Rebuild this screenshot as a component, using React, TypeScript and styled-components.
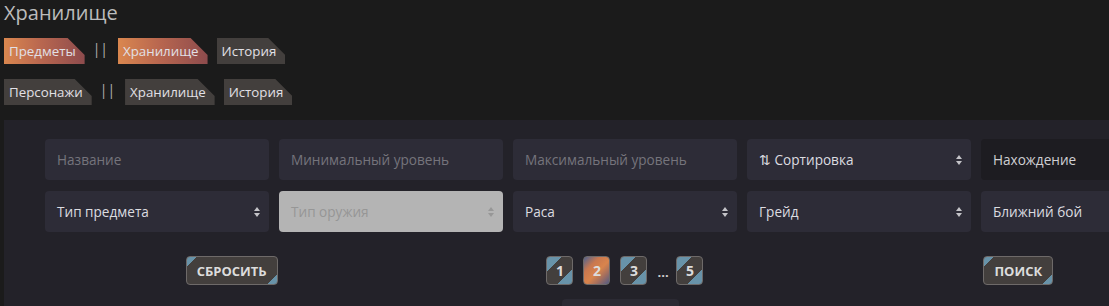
import React from 'react';
import styled, { createGlobalStyle, css } from 'styled-components';

const GlobalStyle = createGlobalStyle`
  html, body {
    margin: 0;
    padding: 0;
    background: #1b1b1b;
    overflow: hidden;
  }
  body {
    font-family: "Open Sans", "Liberation Sans", sans-serif;
    -webkit-font-smoothing: antialiased;
  }
`;

const Page = styled.div`
  padding-left: 4px;
`;

const Title = styled.h2`
  margin: 0;
  font-size: 20px;
  line-height: 26px;
  font-weight: 400;
  color: #bcbcbc;
`;

const TabRow = styled.div<{ $first?: boolean }>`
  display: flex;
  align-items: center;
  margin-top: ${(p) => (p.$first ? '12px' : '15px')};
`;

const Tab = styled.a<{ $active?: boolean }>`
  display: inline-flex;
  align-items: center;
  height: 26px;
  padding: 0 9px 0 5px;
  font-size: 13.3px;
  color: #e2e0e6;
  text-decoration: none;
  clip-path: polygon(0 0, calc(100% - 17px) 0, 100% 17px, 100% 100%, 0 100%);
  background: ${(p) => (p.$active ? 'linear-gradient(90deg, #da874f 0%, #b9674f 45%, #8d4b4d 100%)' : '#433f3d')};
  & + & {
    margin-left: 9px;
  }
`;

const Separator = styled.span`
  margin: -6px 10px 0 8px;
  font-size: 14px;
  color: #b0b0b0;
`;

const Panel = styled.section`
  margin-top: 15px;
  width: 1242px;
  height: 200px;
  box-sizing: border-box;
  padding: 19px 41px 0;
  background: #232229;
`;

const Filters = styled.div`
  display: grid;
  grid-template-columns: repeat(5, 224px);
  grid-auto-rows: 41px;
  column-gap: 10px;
  row-gap: 11px;
`;

const fieldBase = css`
  display: flex;
  align-items: center;
  justify-content: space-between;
  box-sizing: border-box;
  padding: 0 9px 0 12px;
  border-radius: 4px;
  font-size: 13.6px;
`;

const Field = styled.div<{ $variant?: 'placeholder' | 'value' | 'dark' | 'disabled' }>`
  ${fieldBase};
  background: ${(p) => (p.$variant === 'dark' ? '#1d1c21' : p.$variant === 'disabled' ? '#b4b4b4' : '#2d2c37')};
  color: ${(p) =>
    p.$variant === 'placeholder' ? '#75747c' : p.$variant === 'disabled' ? '#969696' : p.$variant === 'dark' ? '#d0d0d4' : '#dcdce0'};
`;

const Arrows = ({ color }: { color: string }) => (
  <svg width="6" height="10" viewBox="0 0 6 10">
    <path d="M3 0 L6 4 L0 4 Z M3 10 L6 6 L0 6 Z" fill={color} />
  </svg>
);

const Actions = styled.div`
  display: grid;
  grid-template-columns: repeat(3, 1fr);
  align-items: center;
  justify-items: center;
  margin: 24px -10px 0;
`;

const cornerBtn = css`
  box-sizing: border-box;
  height: 29px;
  border: 1px solid #6e6a69;
  border-radius: 4px;
  color: #dcdcdc;
  font-family: "Open Sans", "Liberation Sans", sans-serif;
  font-weight: 700;
  display: inline-flex;
  align-items: center;
  justify-content: center;
`;

const ActionButton = styled.button`
  ${cornerBtn};
  padding: 0 10px;
  font-size: 13px;
  background: linear-gradient(135deg, #6893a9 7px, transparent 7px),
    linear-gradient(315deg, #6893a9 7px, transparent 7px), #433f3d;
`;

const Pager = styled.div`
  display: flex;
  align-items: center;
  gap: 10px;
`;

const PageButton = styled.button<{ $current?: boolean }>`
  ${cornerBtn};
  width: 27px;
  padding: 0;
  font-size: 14px;
  background: ${(p) =>
    p.$current
      ? 'linear-gradient(135deg, #4d6390 0%, #c9784f 30%, #d9844c 55%, #a46f5e 75%, #4f5b86 100%)'
      : 'linear-gradient(135deg, #6893a9 10px, transparent 10px), linear-gradient(315deg, #6893a9 10px, transparent 10px), #433f3d'};
`;

const Ellipsis = styled.span`
  width: 9px;
  color: #d0d0d0;
  font-size: 13px;
  font-weight: 700;
  line-height: 1;
  margin-top: 4px;
`;

const Below = styled.div`
  margin: 14px 0 0 517px;
  width: 117px;
  height: 20px;
  border-radius: 4px 4px 0 0;
  background: #2b2a33;
`;

export default function App() {
  return (
    <>
      <GlobalStyle />
      <Page>
        <Title>Хранилище</Title>
        <TabRow $first>
          <Tab $active>Предметы</Tab>
          <Separator>||</Separator>
          <Tab $active>Хранилище</Tab>
          <Tab>История</Tab>
        </TabRow>
        <TabRow>
          <Tab>Персонажи</Tab>
          <Separator>||</Separator>
          <Tab>Хранилище</Tab>
          <Tab>История</Tab>
        </TabRow>
        <Panel>
          <Filters>
            <Field $variant="placeholder">Название</Field>
            <Field $variant="placeholder">Минимальный уровень</Field>
            <Field $variant="placeholder">Максимальный уровень</Field>
            <Field $variant="value">
              <span>⇅ Сортировка</span>
              <Arrows color="#c4c4c8" />
            </Field>
            <Field $variant="dark">Нахождение</Field>
            <Field $variant="value">
              <span>Тип предмета</span>
              <Arrows color="#c4c4c8" />
            </Field>
            <Field $variant="disabled">
              <span>Тип оружия</span>
              <Arrows color="#979797" />
            </Field>
            <Field $variant="value">
              <span>Раса</span>
              <Arrows color="#c4c4c8" />
            </Field>
            <Field $variant="value">
              <span>Грейд</span>
              <Arrows color="#c4c4c8" />
            </Field>
            <Field $variant="value">
              <span>Ближний бой</span>
              <Arrows color="#c4c4c8" />
            </Field>
          </Filters>
          <Actions>
            <ActionButton>СБРОСИТЬ</ActionButton>
            <Pager>
              <PageButton>1</PageButton>
              <PageButton $current>2</PageButton>
              <PageButton>3</PageButton>
              <Ellipsis>...</Ellipsis>
              <PageButton>5</PageButton>
            </Pager>
            <ActionButton>ПОИСК</ActionButton>
          </Actions>
          <Below />
        </Panel>
      </Page>
    </>
  );
}
